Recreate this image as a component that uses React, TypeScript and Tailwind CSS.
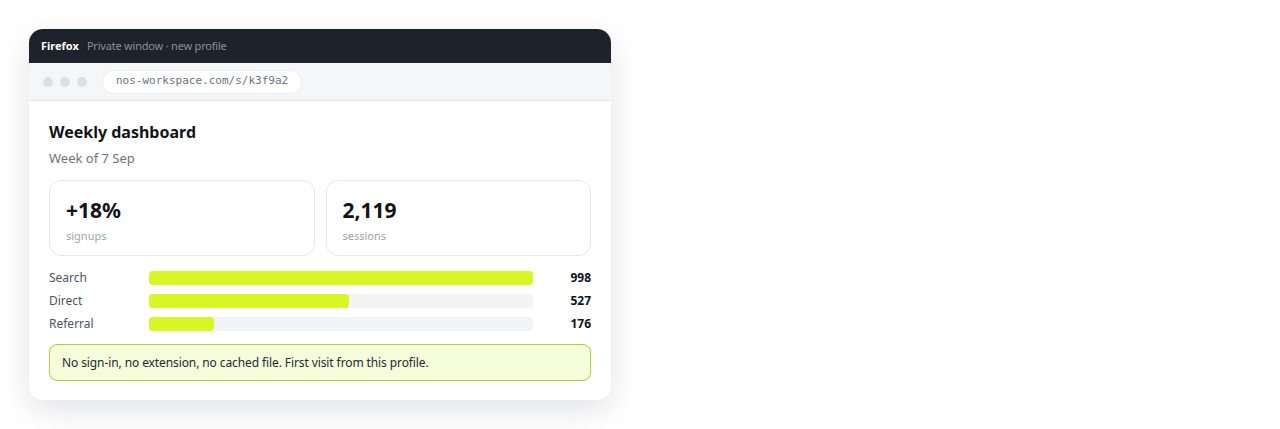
const rows = [
  { label: "Search", value: 998, pct: 100 },
  { label: "Direct", value: 527, pct: 52.2 },
  { label: "Referral", value: 176, pct: 17 },
];

export default function App() {
  return (
    <div className="w-[1280px] h-[429px] bg-white font-['Noto_Sans',sans-serif]">
      <div className="pt-[29px] pl-[29px]">
        <div className="w-[582px] rounded-[14px] bg-white overflow-hidden shadow-[0_10px_30px_rgba(15,23,42,0.12)]">
          <div className="h-[34px] bg-[#1e222a] flex items-center px-3 gap-2">
            <span className="text-white text-[11px] font-bold">Firefox</span>
            <span className="text-[#8a8f99] text-[11px] tracking-[-0.2px]">Private window · new profile</span>
          </div>
          <div className="h-[38px] bg-[#f5f6f8] border-b border-[#e5e7eb] flex items-center px-[14px] gap-[7px]">
            <span className="w-[10px] h-[10px] rounded-full bg-[#dcdfe3]"></span>
            <span className="w-[10px] h-[10px] rounded-full bg-[#dcdfe3]"></span>
            <span className="w-[10px] h-[10px] rounded-full bg-[#dcdfe3]"></span>
            <span className="ml-[8px] h-[24px] px-[13px] flex items-center rounded-full bg-white border border-[#eceef1] text-[11px] text-[#6b7280] font-['DejaVu_Sans_Mono',monospace]">
              nos-workspace.com/s/k3f9a2
            </span>
          </div>
          <div className="px-5 pt-[20px] pb-[19px]">
            <h1 className="text-[16px] font-bold text-[#111318] leading-[22px]">Weekly dashboard</h1>
            <p className="mt-[6px] text-[13px] text-[#6b7280] leading-[18px]">Week of 7 Sep</p>
            <div className="mt-[13px] grid grid-cols-2 gap-[11px]">
              <div className="h-[76px] rounded-xl border border-[#e5e7eb] px-4 pt-[15px]">
                <div className="text-[21px] font-bold text-[#111318] leading-[28px]">+18%</div>
                <div className="mt-[5px] text-[11px] text-[#9ca3af] leading-[14px]">signups</div>
              </div>
              <div className="h-[76px] rounded-xl border border-[#e5e7eb] px-4 pt-[15px]">
                <div className="text-[21px] font-bold text-[#111318] leading-[28px]">2,119</div>
                <div className="mt-[5px] text-[11px] text-[#9ca3af] leading-[14px]">sessions</div>
              </div>
            </div>
            <div className="mt-[15px] flex flex-col gap-[9px]">
              {rows.map((r) => (
                <div key={r.label} className="flex items-center h-[14px]">
                  <span className="w-[100px] text-[12px] text-[#4b5563]">{r.label}</span>
                  <div className="w-[384px] h-[14px] rounded bg-[#f3f4f6]">
                    <div className="h-full rounded bg-[#d7f624]" style={{ width: `${r.pct}%` }}></div>
                  </div>
                  <span className="flex-1 text-right text-[12px] font-bold text-[#111318]">{r.value}</span>
                </div>
              ))}
            </div>
            <div className="mt-[13px] h-[37px] rounded-lg border border-[#b8c93a] bg-[#f5fcd9] px-3 flex items-center text-[12px] text-[#1f2937] tracking-[-0.1px]">
              No sign-in, no extension, no cached file. First visit from this profile.
            </div>
          </div>
        </div>
      </div>
    </div>
  );
}
